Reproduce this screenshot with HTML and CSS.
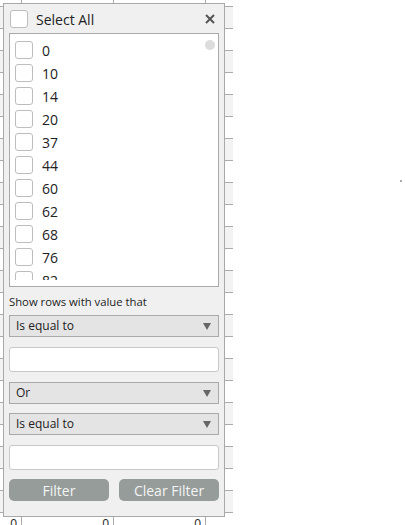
FILE: index.html
```html
<!DOCTYPE html>
<html lang="en">
<head>
    <meta charset="UTF-8">
    <title>Column Filter</title>
    <link rel="stylesheet" href="styles.css">
</head>
<body>
    <div class="grid">
        <div class="row head"><div class="cell"></div><div class="cell"></div><div class="cell"></div><div class="cell last"></div></div>
        <div class="row alt"><div class="cell">0</div><div class="cell">0</div><div class="cell">0</div><div class="cell last"></div></div>
        <div class="row"><div class="cell">0</div><div class="cell">0</div><div class="cell">0</div><div class="cell last"></div></div>
        <div class="row alt"><div class="cell">0</div><div class="cell">0</div><div class="cell">0</div><div class="cell last"></div></div>
        <div class="row"><div class="cell">0</div><div class="cell">0</div><div class="cell">0</div><div class="cell last"></div></div>
        <div class="row alt"><div class="cell">0</div><div class="cell">0</div><div class="cell">0</div><div class="cell last"></div></div>
        <div class="row"><div class="cell">0</div><div class="cell">0</div><div class="cell">0</div><div class="cell last"></div></div>
        <div class="row alt"><div class="cell">0</div><div class="cell">0</div><div class="cell">0</div><div class="cell last"></div></div>
        <div class="row"><div class="cell">0</div><div class="cell">0</div><div class="cell">0</div><div class="cell last"></div></div>
        <div class="row alt"><div class="cell">0</div><div class="cell">0</div><div class="cell">0</div><div class="cell last"></div></div>
        <div class="row"><div class="cell">0</div><div class="cell">0</div><div class="cell">0</div><div class="cell last"></div></div>
        <div class="row alt"><div class="cell">0</div><div class="cell">0</div><div class="cell">0</div><div class="cell last"></div></div>
        <div class="row"><div class="cell">0</div><div class="cell">0</div><div class="cell">0</div><div class="cell last"></div></div>
        <div class="row alt"><div class="cell">0</div><div class="cell">0</div><div class="cell">0</div><div class="cell last"></div></div>
        <div class="row"><div class="cell">0</div><div class="cell">0</div><div class="cell">0</div><div class="cell last"></div></div>
        <div class="row alt"><div class="cell">0</div><div class="cell">0</div><div class="cell">0</div><div class="cell last"></div></div>
        <div class="row"><div class="cell">0</div><div class="cell">0</div><div class="cell">0</div><div class="cell last"></div></div>
        <div class="row alt"><div class="cell">0</div><div class="cell">0</div><div class="cell">0</div><div class="cell last"></div></div>
        <div class="row"><div class="cell">0</div><div class="cell">0</div><div class="cell">0</div><div class="cell last"></div></div>
        <div class="row alt"><div class="cell">0</div><div class="cell">0</div><div class="cell">0</div><div class="cell last"></div></div>
        <div class="row"><div class="cell">0</div><div class="cell">0</div><div class="cell">0</div><div class="cell last"></div></div>
        <div class="row alt"><div class="cell">0</div><div class="cell">0</div><div class="cell">0</div><div class="cell last"></div></div>
        <div class="row"><div class="cell">0</div><div class="cell">0</div><div class="cell">0</div><div class="cell last"></div></div>
        <div class="row alt"><div class="cell">0</div><div class="cell">0</div><div class="cell">0</div><div class="cell last"></div></div>
        <div class="row"><div class="cell">0</div><div class="cell">0</div><div class="cell">0</div><div class="cell last"></div></div>
    </div>

    <div class="dot"></div>

    <div class="filter-popup">
        <div class="popup-head">
            <span class="check"></span>
            <span class="head-label">Select All</span>
            <svg class="close" width="10" height="10" viewBox="0 0 10 10">
                <path d="M1 1 L9 9 M9 1 L1 9" stroke="#555" stroke-width="2" fill="none"/>
            </svg>
        </div>

        <div class="value-list">
            <span class="scroll-dot"></span>
            <div class="items">
                <div class="item"><span class="check"></span>0</div>
                <div class="item"><span class="check"></span>10</div>
                <div class="item"><span class="check"></span>14</div>
                <div class="item"><span class="check"></span>20</div>
                <div class="item"><span class="check"></span>37</div>
                <div class="item"><span class="check"></span>44</div>
                <div class="item"><span class="check"></span>60</div>
                <div class="item"><span class="check"></span>62</div>
                <div class="item"><span class="check"></span>68</div>
                <div class="item"><span class="check"></span>76</div>
                <div class="item"><span class="check"></span>82</div>
            </div>
        </div>

        <div class="caption">Show rows with value that</div>

        <div class="select first">Is equal to<span class="arrow"></span></div>
        <div class="textbox"></div>
        <div class="select">Or<span class="arrow"></span></div>
        <div class="select third">Is equal to<span class="arrow"></span></div>
        <div class="textbox"></div>

        <div class="buttons">
            <button class="btn">Filter</button>
            <button class="btn">Clear Filter</button>
        </div>
    </div>
</body>
</html>
```

FILE: styles.css
```css
body {
    margin: 0;
    background-color: #fff;
    font-family: "Open Sans", "Noto Sans", sans-serif;
    overflow: hidden;
}
.grid {
    width: 233px;
    margin-top: -16px;
}
.row {
    display: grid;
    grid-template-columns: 22px 92px 92px 27px;
    height: 22px;
    box-sizing: border-box;
    border-top: 1px solid #ababab;
    background-color: #fff;
}
.row.alt {
    background-color: #f3f3f3;
}
.cell {
    border-right: 1px solid #ababab;
    text-align: right;
    padding-right: 4px;
    font-size: 12px;
    line-height: 21px;
    color: #222;
}
.cell.last {
    border-right: none;
}
.dot {
    position: absolute;
    left: 400px;
    top: 180px;
    width: 2px;
    height: 2px;
    background-color: #aaa;
}
.filter-popup {
    position: absolute;
    left: 3px;
    top: 3px;
    width: 210px;
    height: 512px;
    padding: 0 5px;
    background-color: #f0f0f0;
    border: 1px solid #a9a9a9;
    display: flex;
    flex-direction: column;
}
.check {
    display: inline-block;
    width: 16px;
    height: 16px;
    border: 1px solid #bdbdbd;
    border-radius: 3px;
    background-color: #fff;
    flex-shrink: 0;
}
.popup-head {
    display: flex;
    align-items: center;
    height: 18px;
    margin-top: 6px;
    padding-left: 1px;
}
.head-label {
    font-size: 14px;
    color: #222;
    margin-left: 8px;
    flex: 1;
}
.close {
    margin-right: 4px;
}
.value-list {
    position: relative;
    box-sizing: border-box;
    height: 254px;
    margin-top: 5px;
    background-color: #fff;
    border: 1px solid #a9a9a9;
    padding: 7px 5px 6px;
    flex-shrink: 0;
}
.items {
    height: 239px;
    overflow: hidden;
    display: flex;
    flex-direction: column;
    gap: 5px;
}
.scroll-dot {
    position: absolute;
    right: 3px;
    top: 6px;
    width: 10px;
    height: 10px;
    border-radius: 50%;
    background-color: #dcdcdc;
}
.item {
    display: flex;
    align-items: center;
    gap: 9px;
    height: 18px;
    font-size: 14px;
    color: #222;
    flex-shrink: 0;
}
.caption {
    font-size: 11.3px;
    line-height: 16px;
    color: #222;
    margin-top: 7px;
}
.select {
    position: relative;
    height: 20px;
    line-height: 20px;
    margin-top: 10px;
    padding-left: 6px;
    font-size: 12px;
    color: #222;
    background-color: #e4e4e4;
    border: 1px solid #a9a9a9;
}
.select.first {
    margin-top: 5px;
}
.select.third {
    margin-top: 9px;
}
.arrow {
    position: absolute;
    right: 7px;
    top: 7px;
    width: 0;
    height: 0;
    border-left: 4px solid transparent;
    border-right: 4px solid transparent;
    border-top: 7px solid #666;
}
.textbox {
    height: 23px;
    margin-top: 10px;
    background-color: #fff;
    border: 1px solid #c8c8c8;
    border-radius: 3px;
}
.buttons {
    display: flex;
    gap: 10px;
    margin-top: 9px;
}
.btn {
    flex: 1;
    height: 22px;
    padding: 0;
    border: none;
    border-radius: 5px;
    background-color: #959c99;
    color: #f4f4f4;
    font-family: "Open Sans", "Noto Sans", sans-serif;
    font-size: 14px;
}
```
